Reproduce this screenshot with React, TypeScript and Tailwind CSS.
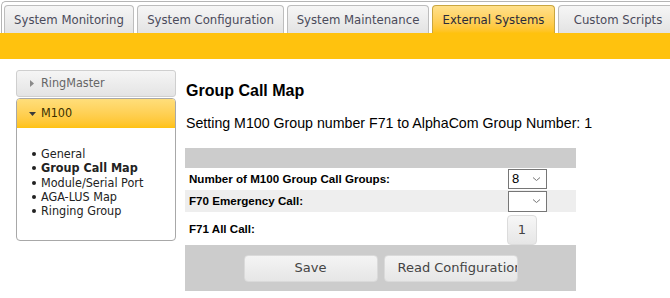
import React from "react";

const verdana = { fontFamily: '"DejaVu Sans Condensed", "DejaVu Sans", Verdana, sans-serif' };
const verdanaWide = { fontFamily: '"DejaVu Sans", Verdana, sans-serif' };
const arial = { fontFamily: '"Liberation Sans", Arial, sans-serif' };

function Tab({ label, active, w }: { label: string; active?: boolean; w: string }) {
  return (
    <div
      className={`${w} h-[28px] shrink-0 flex items-center justify-center rounded-t-[4px] border border-b-0 text-[13px] ${
        active
          ? "border-[#c9a640] bg-gradient-to-b from-[#ffe08a] to-[#ffc20e] text-[#2a2a3a]"
          : "border-[#bdbdbd] bg-gradient-to-b from-[#f6f6f6] to-[#e3e3e3] text-[#4a4a5a]"
      }`}
      style={verdana}
    >
      {label}
    </div>
  );
}

function Chevron() {
  return (
    <svg width="9" height="6" viewBox="0 0 9 6" className="ml-auto">
      <path d="M1 1.5 L4.5 4.5 L8 1.5" fill="none" stroke="#777" strokeWidth="1" />
    </svg>
  );
}

function Bullet() {
  return <span className="w-[4px] h-[4px] rounded-full bg-[#222] mr-[5px] shrink-0" />;
}

export default function App() {
  return (
    <div className="w-[670px] h-[298px] overflow-hidden bg-white relative">
      {/* top nav */}
      <div className="mt-px ml-px border-t border-l border-[#b5b5b5] rounded-tl-[5px] pt-[3px] pl-[2px] flex gap-[3px] w-[720px]">
        <Tab label="System Monitoring" w="w-[130px]" />
        <Tab label="System Configuration" w="w-[147px]" />
        <Tab label="System Maintenance" w="w-[142px]" />
        <Tab label="External Systems" w="w-[123px]" active />
        <Tab label="Custom Scripts" w="w-[120px]" />
      </div>
      <div className="h-[26px] bg-[#ffc20e]" />

      <div className="flex">
        {/* sidebar */}
        <div className="ml-[16px] mt-[11px] w-[160px] shrink-0" style={verdana}>
          <div className="h-[27px] rounded-[3px] border border-[#cfcfcf] bg-gradient-to-b from-[#f5f5f5] to-[#e4e4e4] flex items-center pl-[13px] text-[12.5px] text-[#666]">
            <svg width="4" height="7" viewBox="0 0 4 7" className="mr-[7px]">
              <path d="M0 0 L4 3.5 L0 7 Z" fill="#8a8a8a" />
            </svg>
            RingMaster
          </div>
          <div className="mt-[1px] h-[143px] rounded-[4px] border border-[#a8a8a8] overflow-hidden">
            <div className="h-[29px] bg-gradient-to-b from-[#ffde7a] to-[#ffc20e] flex items-center pl-[12px] text-[12.5px] text-[#3a3000]">
              <svg width="7" height="4" viewBox="0 0 7 4" className="mr-[5px]">
                <path d="M0 0 L7 0 L3.5 4 Z" fill="#3a3a3a" />
              </svg>
              M100
            </div>
            <div className="pt-[19px] pl-[15px] text-[12.5px] leading-[14.3px] text-[#222]">
              <div className="flex items-center"><Bullet />General</div>
              <div className="flex items-center font-bold"><Bullet />Group Call Map</div>
              <div className="flex items-center"><Bullet />Module/Serial Port</div>
              <div className="flex items-center"><Bullet />AGA-LUS Map</div>
              <div className="flex items-center"><Bullet />Ringing Group</div>
            </div>
          </div>
        </div>

        {/* main */}
        <div className="ml-[9px] w-[391px] shrink-0" style={arial}>
          <div className="mt-[22px] pl-px text-[16px] font-bold text-black leading-[19px]">Group Call Map</div>
          <div className="mt-[15px] pl-px text-[14.2px] text-black leading-[17px] whitespace-nowrap">
            Setting M100 Group number F71 to AlphaCom Group Number: 1
          </div>
          <div className="mt-[16px] w-[391px]">
            <div className="h-[20px] bg-[#cccccc]" />
            <div className="h-[22px] flex items-center pl-[4px] pr-[29px] text-[11.6px] font-bold text-black">
              <span>Number of M100 Group Call Groups:</span>
              <div className="ml-auto w-[39px] h-[20px] border border-[#767676] bg-white flex items-center pl-[3px] pr-[5px] text-[13px] font-normal">
                8
                <Chevron />
              </div>
            </div>
            <div className="h-[22px] flex items-center pl-[4px] pr-[29px] text-[11.6px] font-bold text-black bg-[#eeeeee]">
              <span>F70 Emergency Call:</span>
              <div className="ml-auto w-[39px] h-[21px] border border-[#767676] bg-white flex items-center pl-[3px] pr-[5px]">
                <Chevron />
              </div>
            </div>
            <div className="h-[33px] flex items-center pl-[4px] pr-[39px] text-[11.6px] font-bold text-black">
              <span>F71 All Call:</span>
              <div
                className="ml-auto mt-[3px] w-[30px] h-[30px] rounded-[4px] border border-[#dcdcdc] bg-gradient-to-b from-[#f7f7f7] to-[#e6e6e6] flex items-center justify-center text-[13px] font-normal text-[#444]"
                style={verdanaWide}
              >
                1
              </div>
            </div>
            <div className="h-[46px] bg-[#cccccc] flex items-center justify-center gap-[6px]" style={verdanaWide}>
              <div className="w-[134px] h-[27px] rounded-[4px] border border-[#dadada] bg-gradient-to-b from-[#f4f4f4] to-[#e6e6e6] flex items-center justify-center text-[13px] text-[#444]">
                Save
              </div>
              <div className="w-[134px] h-[27px] rounded-[4px] border border-[#dadada] bg-gradient-to-b from-[#f4f4f4] to-[#e6e6e6] flex items-center pl-[13px] text-[13px] text-[#444] overflow-hidden whitespace-nowrap">
                Read Configuration
              </div>
            </div>
          </div>
        </div>
      </div>
    </div>
  );
}
